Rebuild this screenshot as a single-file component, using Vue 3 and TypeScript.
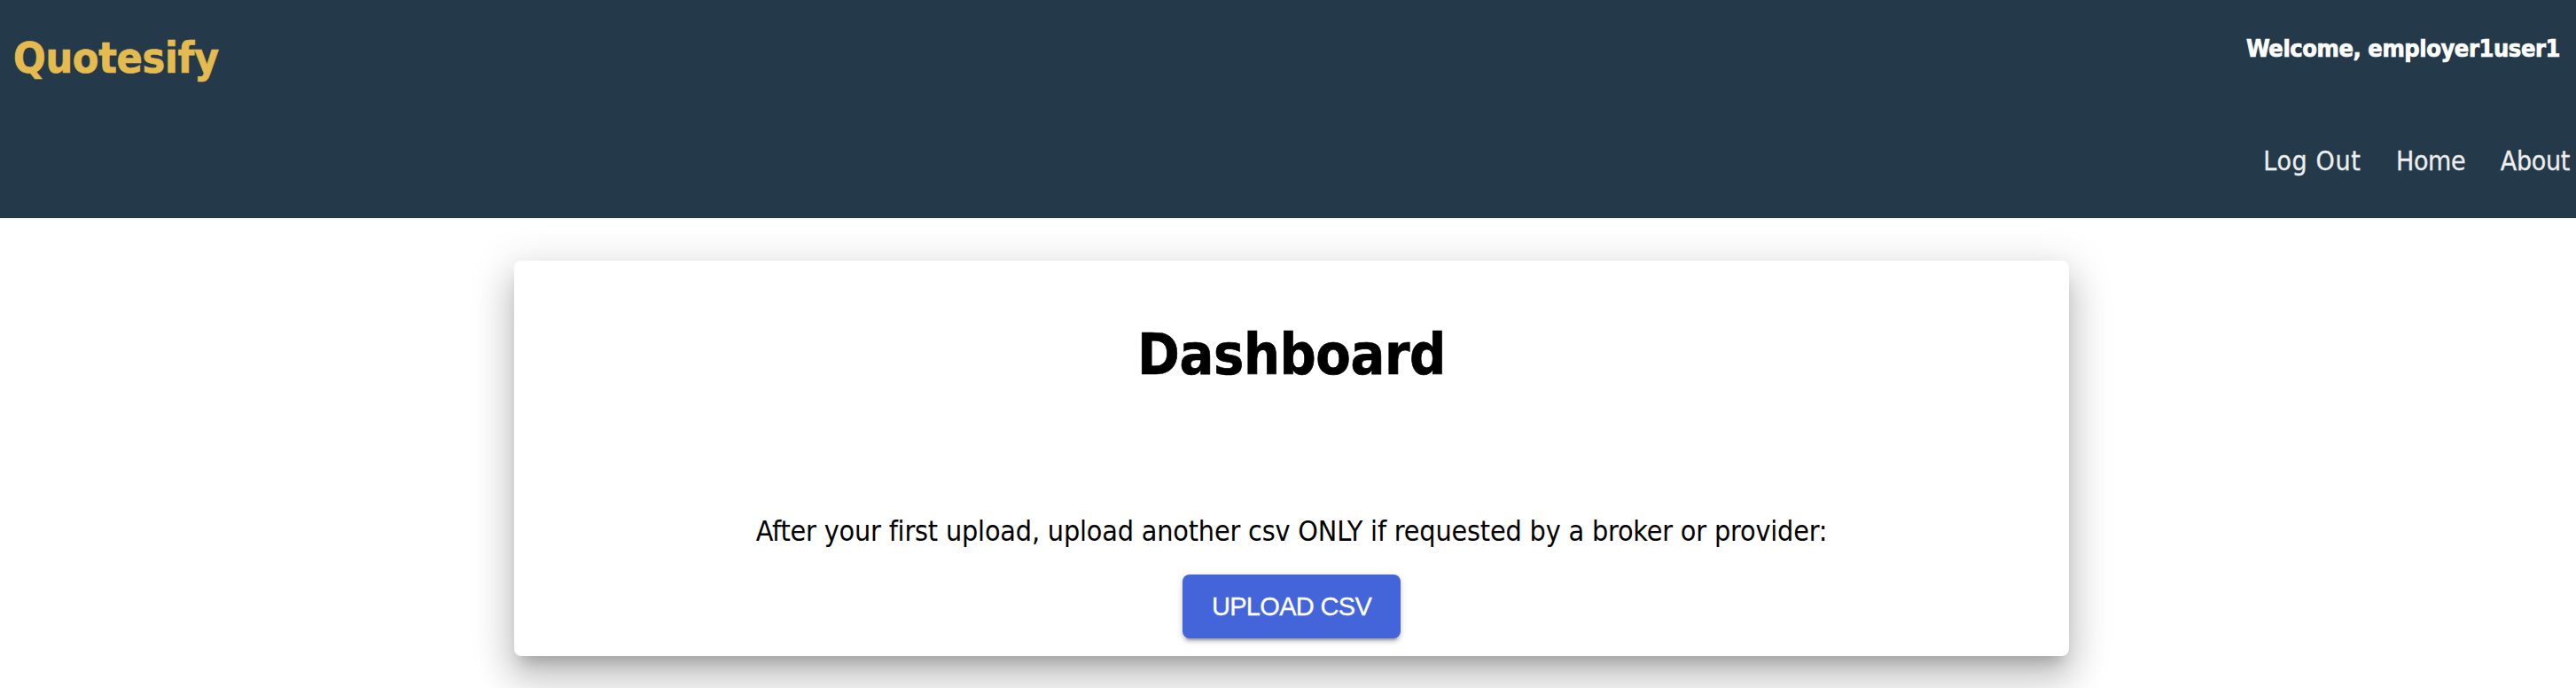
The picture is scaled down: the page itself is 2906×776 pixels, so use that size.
<script setup lang="ts">
const username = 'employer1user1'
const links: { label: string; key: string }[] = [
  { label: 'Log Out', key: 'logout' },
  { label: 'Home', key: 'home' },
  { label: 'About', key: 'about' },
]
</script>

<template>
  <div class="app">
    <header class="header">
      <h1 class="brand">Quotesify</h1>
      <div class="account">
        <h2 class="welcome">Welcome, {{ username }}</h2>
        <nav class="nav">
          <a v-for="link in links" :key="link.key" :class="['link', link.key]">{{ link.label }}</a>
        </nav>
      </div>
    </header>
    <main class="card">
      <h2 class="title">Dashboard</h2>
      <p class="note">After your first upload, upload another csv ONLY if requested by a broker or provider:</p>
      <button class="upload" type="button">UPLOAD CSV</button>
    </main>
  </div>
</template>

<style>
body {
  margin: 0;
  background: #fff;
  overflow: hidden;
}
</style>

<style scoped>
.app {
  height: 776px;
  overflow: hidden;
  font-family: Tahoma, "DejaVu Sans Condensed", "DejaVu Sans", sans-serif;
  font-variant-ligatures: none;
}
.header {
  display: flex;
  justify-content: space-between;
  height: 246px;
  box-sizing: border-box;
  background: #243a4a;
}
.brand {
  margin: 35px 0 0 15px;
  font-size: 48px;
  line-height: 60px;
  letter-spacing: -0.29px;
  color: #e5bb4f;
  -webkit-text-stroke: 0.7px #e5bb4f;
}
.account {
  display: flex;
  flex-direction: column;
  align-items: flex-end;
}
.welcome {
  margin: 35px 18px 0 0;
  font-size: 27px;
  line-height: 40px;
  letter-spacing: -0.42px;
  color: #fff;
  -webkit-text-stroke: 0.7px #fff;
}
.nav {
  display: flex;
  gap: 39.5px;
  margin: 87px 7px 0 0;
}
.link {
  font-size: 30px;
  line-height: 40px;
  letter-spacing: -0.33px;
  color: #eee;
  -webkit-text-stroke: 0.3px #eee;
}
.logout {
  letter-spacing: 0.65px;
}
.card {
  display: flex;
  flex-direction: column;
  align-items: center;
  width: 1754px;
  height: 446px;
  box-sizing: border-box;
  margin: 48px 0 0 580px;
  padding-top: 66px;
  border-radius: 8px;
  background: #fff;
  box-shadow:
    0 14px 16px -8px rgba(0, 0, 0, 0.2),
    0 26px 38px 4px rgba(0, 0, 0, 0.14),
    0 10px 48px 8px rgba(0, 0, 0, 0.12);
}
.title {
  margin: 0;
  font-size: 64px;
  line-height: 80px;
  letter-spacing: -0.38px;
  color: #000;
  -webkit-text-stroke: 0.7px #000;
}
.note {
  margin: 139px 0 0;
  font-size: 32px;
  line-height: 40px;
  letter-spacing: -0.18px;
  color: #000;
}
.upload {
  display: flex;
  align-items: center;
  justify-content: center;
  width: 246px;
  height: 72px;
  margin: 29px 0 0;
  padding: 0;
  border: 0;
  border-radius: 8px;
  background: #4464d9;
  color: #fff;
  font: 29px "Liberation Sans", Arial, sans-serif;
  letter-spacing: -0.67px;
  -webkit-text-stroke: 0.3px #fff;
  box-shadow:
    0 6px 2px -4px rgba(0, 0, 0, 0.2),
    0 4px 4px 0 rgba(0, 0, 0, 0.14),
    0 2px 10px 0 rgba(0, 0, 0, 0.12);
}
</style>
